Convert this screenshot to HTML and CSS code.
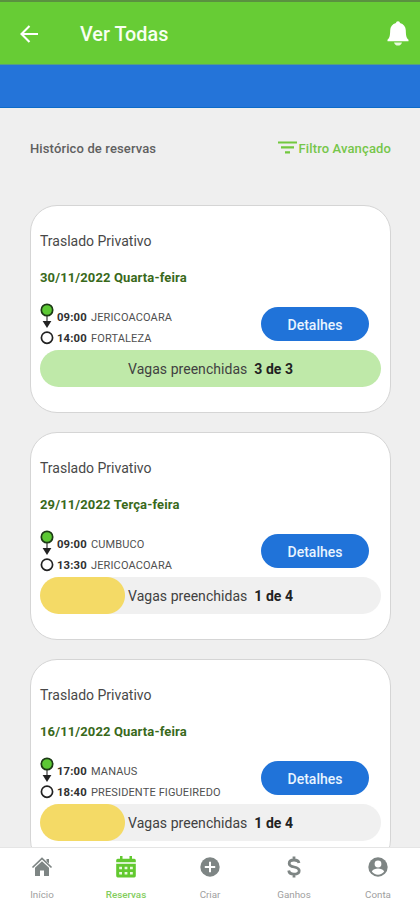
FILE: index.html
```html
<!DOCTYPE html>
<html lang="pt-BR">
<head>
<meta charset="utf-8">
<title>Ver Todas</title>
<link rel="stylesheet" href="styles.css">
</head>
<body>
<svg class="defs" width="0" height="0">
  <symbol id="route" viewBox="0 0 14 44">
    <path d="M7 13v8" stroke="#555" stroke-width="1.4"/>
    <path d="M2.600 18h8.800L7 25z" fill="#222"/>
    <circle cx="7" cy="7" r="5.700" fill="#5cc934" stroke="#1d3a16" stroke-width="1.700"/>
    <circle cx="7" cy="34.700" r="5.600" fill="#fff" stroke="#222" stroke-width="1.700"/>
  </symbol>
</svg>
<div class="screen">
  <header class="topbar">
    <svg class="back" viewBox="0 0 18 18"><path d="M18 9H1.800M9.500 1L1.500 9L9.500 17" fill="none" stroke="#fff" stroke-width="2.100"/></svg>
    <h1>Ver Todas</h1>
    <svg class="bell" viewBox="0 0 22 25"><path d="M11 .2c1.300 0 1.900.8 2 1.900 3.700.9 5.700 3.700 5.800 7.200.1 5 .5 7.600 2.700 9.400v1.500H.5v-1.500c2.200-1.800 2.600-4.400 2.700-9.400C3.300 5.800 5.300 3 9 2.100 9.100 1 9.700.2 11 .2z" fill="#fff"/><path d="M7 21.400h8c-.5 2-2 3.200-4 3.200s-3.500-1.200-4-3.200z" fill="#e9f9df"/></svg>
  </header>
  <div class="band"></div>
  <main class="content">
    <div class="toolbar">
      <h2>Histórico de reservas</h2>
      <div class="filter">
        <svg viewBox="0 0 19 13"><path d="M0 1.500h19M3 6.300h13M7 11.300h5" stroke="#72c83e" stroke-width="2.200"/></svg>
        <span>Filtro Avançado</span>
      </div>
    </div>

    <article class="card">
      <h3>Traslado Privativo</h3>
      <p class="date">30/11/2022 Quarta-feira</p>
      <div class="trip">
        <svg class="route"><use href="#route"/></svg>
        <div class="stops">
          <p><b>09:00</b><span>JERICOACOARA</span></p>
          <p><b>14:00</b><span>FORTALEZA</span></p>
        </div>
        <div class="button">Detalhes</div>
      </div>
      <div class="seats full"><span>Vagas preenchidas</span><b>3 de 3</b></div>
    </article>

    <article class="card">
      <h3>Traslado Privativo</h3>
      <p class="date">29/11/2022 Terça-feira</p>
      <div class="trip">
        <svg class="route"><use href="#route"/></svg>
        <div class="stops">
          <p><b>09:00</b><span>CUMBUCO</span></p>
          <p><b>13:30</b><span>JERICOACOARA</span></p>
        </div>
        <div class="button">Detalhes</div>
      </div>
      <div class="seats partial"><span>Vagas preenchidas</span><b>1 de 4</b></div>
    </article>

    <article class="card">
      <h3>Traslado Privativo</h3>
      <p class="date">16/11/2022 Quarta-feira</p>
      <div class="trip">
        <svg class="route"><use href="#route"/></svg>
        <div class="stops">
          <p><b>17:00</b><span>MANAUS</span></p>
          <p><b>18:40</b><span>PRESIDENTE FIGUEIREDO</span></p>
        </div>
        <div class="button">Detalhes</div>
      </div>
      <div class="seats partial"><span>Vagas preenchidas</span><b>1 de 4</b></div>
    </article>
  </main>
  <nav class="tabs">
    <div class="tab">
      <svg viewBox="0 0 22 22"><path d="M1.500 11.500L11 2.500l9.500 9" fill="none" stroke="#7e8584" stroke-width="1.700"/><path d="M11 5.200l7 6.600V20h-5v-5.500H9V20H4v-8.200zM15.500 3H18v4.500l-2.500-2.300z" fill="#7e8584"/></svg>
      <span>Início</span>
    </div>
    <div class="tab active">
      <svg viewBox="0 0 22 22"><path d="M1.200 4.200q0-1.500 1.500-1.500H5V0h2.500v2.700h7V0H17v2.700h2.300q1.500 0 1.500 1.500v2.100H1.200zM1.200 7.800h19.600v12q0 1.800-1.500 1.800H2.700q-1.500 0-1.500-1.800z" fill="#62c92f"/><path d="M4.200 10.800h2.800v2.400H4.200zm5.400 0h2.800v2.400H9.600zm5.400 0h2.800v2.400H15zM4.200 16h2.800v2.400H4.200zm5.400 0h2.800v2.400H9.600zm5.400 0h2.800v2.400H15z" fill="#e9fadf"/></svg>
      <span>Reservas</span>
    </div>
    <div class="tab">
      <svg viewBox="0 0 22 22"><circle cx="11" cy="11" r="9.700" fill="#7e8584"/><path d="M11 5.800v10.400M5.800 11h10.400" stroke="#fff" stroke-width="2"/></svg>
      <span>Criar</span>
    </div>
    <div class="tab">
      <svg viewBox="0 0 22 22"><path d="M16 7C15.500 4.700 13.500 4 11 4 8.200 4 6.200 5.200 6.200 7.400c0 5 10 2.200 10 7.300 0 2.200-2.200 3.400-5.200 3.400-2.800 0-5-1-5.300-3.600M11 .4V4m0 14v3.600" fill="none" stroke="#7e8584" stroke-width="2.800"/></svg>
      <span>Ganhos</span>
    </div>
    <div class="tab">
      <svg viewBox="0 0 22 22"><circle cx="11" cy="11" r="9.700" fill="#7e8584"/><circle cx="11" cy="8" r="3.400" fill="#fff"/><path d="M4.800 15.500c1.200-2.200 3.700-3 6.200-3s5 .8 6.200 3c-1.400 2-3.600 3.200-6.200 3.200s-4.800-1.200-6.200-3.200z" fill="#fff"/></svg>
      <span>Conta</span>
    </div>
  </nav>
</div>
</body>
</html>
```

FILE: styles.css
```css
* { box-sizing: border-box; margin: 0; padding: 0; }
body { font-family: Roboto, sans-serif; background: #efefef; overflow: hidden; }
svg { display: block; flex: none; }
.defs { position: absolute; }
.screen { width: 420px; height: 900px; display: flex; flex-direction: column; overflow: hidden; }

.topbar { height: 65px; flex: none; display: flex; align-items: center; background: #67cc35; border-top: 2px solid #5a9140; border-bottom: 1px solid #559f84; padding: 1px 11px 0 20px; }
.back { width: 18px; height: 18px; }
.topbar h1 { margin-left: 42px; padding-top: 1px; flex: 1; font-size: 19.8px; font-weight: 500; color: #f8fff2; }
.bell { width: 22px; height: 25px; }
.band { height: 43px; flex: none; background: #2474d9; border-bottom: 1px solid #0d6bc8; }

.content { flex: 1; min-height: 0; overflow: hidden; padding: 0 29px 0 30px; }
.toolbar { height: 97px; display: flex; align-items: flex-start; justify-content: space-between; padding-top: 33px; line-height: 16px; letter-spacing: 0.13px; }
.toolbar h2 { font-size: 13px; font-weight: 500; color: #606060; }
.filter { display: flex; gap: 2px; font-size: 13px; font-weight: 500; color: #76c64a; }
.filter svg { width: 19px; height: 13px; }

.card { height: 208px; margin-bottom: 19px; padding: 25px 9px 0; background: #fff; border: 1px solid #d5d5d5; border-radius: 27px; }
.card h3 { font-size: 14px; line-height: 20px; font-weight: 400; color: #484848; }
.date { margin-top: 17px; font-size: 13px; letter-spacing: 0.13px; line-height: 20px; font-weight: 700; color: #39691b; }
.trip { height: 44px; margin-top: 15px; display: flex; align-items: flex-start; }
.route { width: 14px; height: 44px; }
.stops { flex: 1; margin-left: 3px; padding-top: 4px; font-size: 11px; letter-spacing: 0.13px; line-height: 21px; white-space: nowrap; color: #505050; }
.stops p { display: flex; gap: 4px; }
.stops b { width: 30px; font-size: 11.3px; color: #303030; }
.button { width: 108px; height: 34px; margin: 4px 12px 0 0; border-radius: 17px; background: #2073d9; color: #e8f4ff; font-size: 14px; font-weight: 500; line-height: 36px; text-align: center; }
.seats { width: 341px; height: 37px; margin-top: 3px; padding-left: 88px; display: flex; gap: 7px; border-radius: 19px; font-size: 14px; letter-spacing: 0.04px; line-height: 38px; color: #414141; background: #f0f0f0; }
.seats b { color: #222; }
.full { background: #bfe9a9; }
.partial { background: radial-gradient(circle at 66.5px 18.5px, #f4da66 18px, transparent 19px), linear-gradient(90deg, #f4da66 66.5px, #f0f0f0 66.5px); }

.tabs { height: 53px; flex: none; display: flex; justify-content: space-around; background: #fff; border-top: 1px solid #e5e5e5; }
.tab { width: 84px; padding-top: 8px; display: flex; flex-direction: column; align-items: center; gap: 10px; font-size: 9.8px; line-height: 13px; color: #a0a0a0; }
.tab svg { width: 22px; height: 22px; }
.active { color: #83cd5d; font-weight: 500; }
```
